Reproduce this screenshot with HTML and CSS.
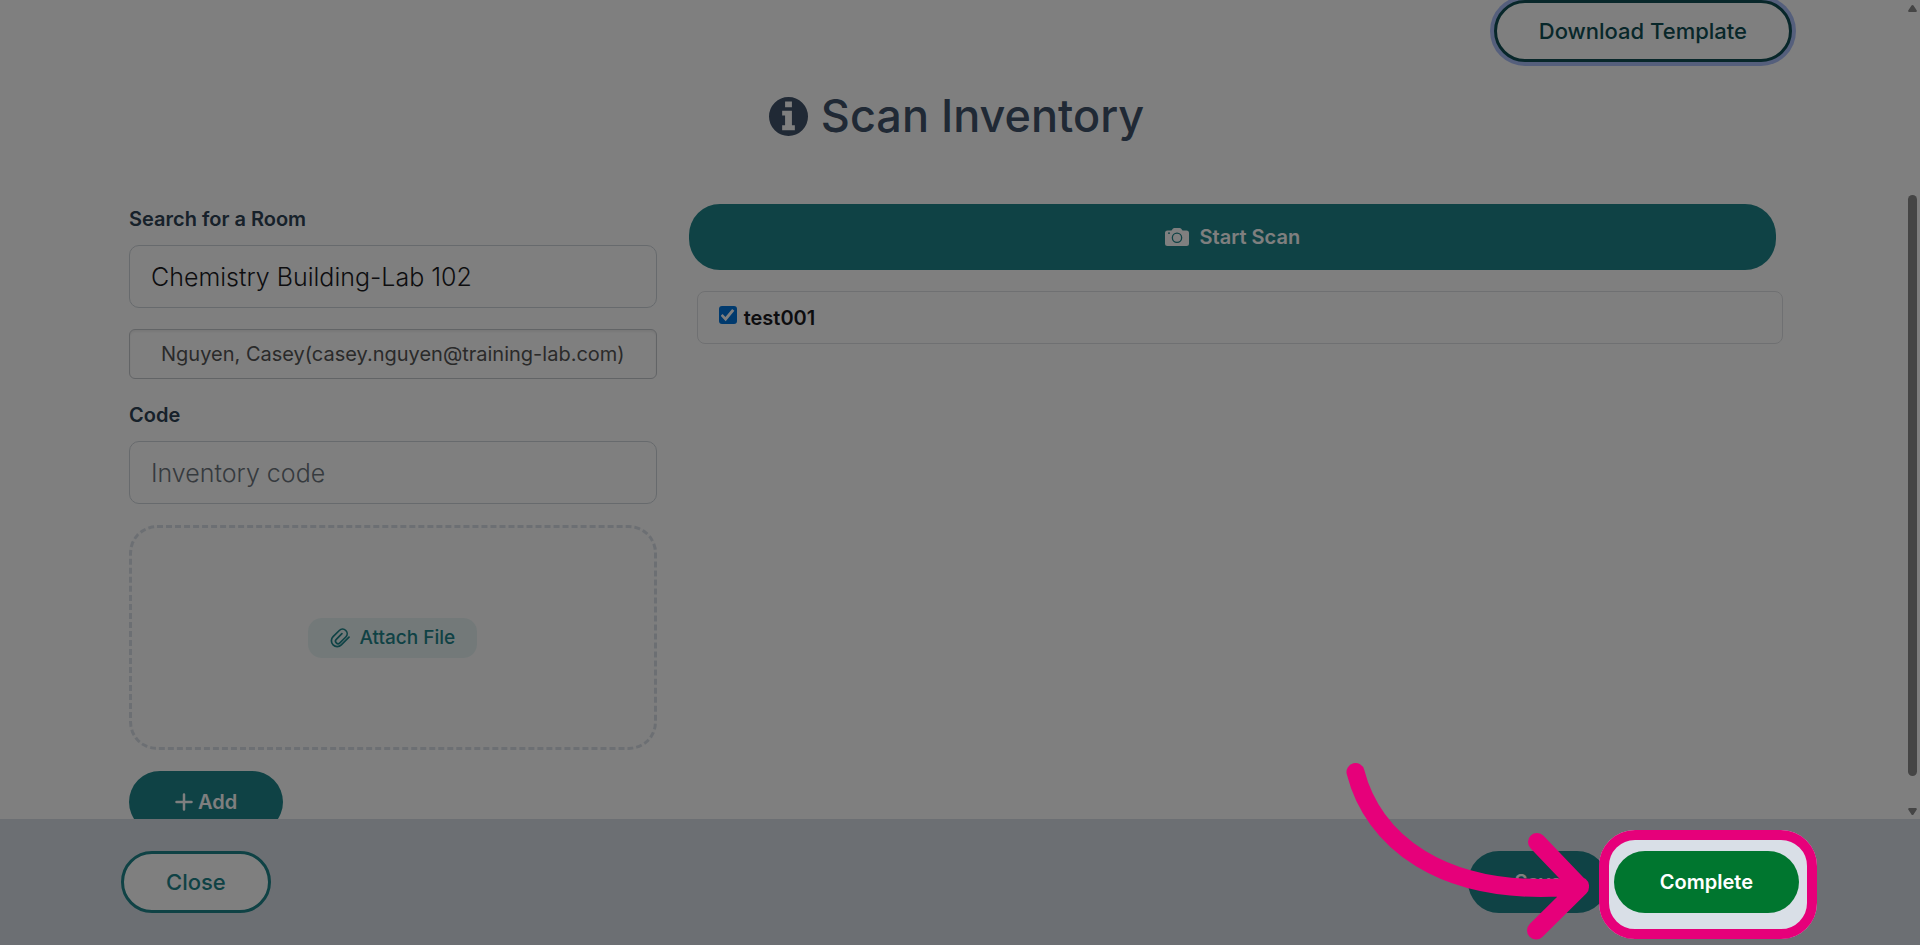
FILE: index.html
```html
<!DOCTYPE html>
<html lang="en">
<head>
<meta charset="utf-8">
<title>Scan Inventory</title>
<link rel="stylesheet" href="styles.css">
</head>
<body>
<div class="app">
  <main class="scroll-area">
    <div class="container">
      <div class="toolbar">
        <button type="button" class="btn btn-outline btn-focused">Download Template</button>
      </div>
      <h1 class="title">
        <svg class="title-icon" viewBox="0 0 40 40" aria-hidden="true"><path fill="currentColor" fill-rule="evenodd" d="M20 0a20 20 0 1 0 0 40a20 20 0 1 0 0-40zM16.500 4.500h7v6h-7zM13.500 14h10v15h3v5h-13v-5h3v-10h-3z"/></svg>
        <span>Scan Inventory</span>
      </h1>
      <div class="columns">
        <form class="column">
          <label class="label" for="room">Search for a Room</label>
          <input class="input" id="room" type="text" value="Chemistry Building-Lab 102">
          <button type="button" class="person">Nguyen, Casey(casey.nguyen@training-lab.com)</button>
          <label class="label" for="code">Code</label>
          <input class="input" id="code" type="text" placeholder="Inventory code">
          <div class="dropzone">
            <button type="button" class="attach">
              <svg class="attach-icon" viewBox="0 0 20 20" aria-hidden="true"><path fill="none" stroke="currentColor" stroke-width="1.700" stroke-linecap="round" stroke-linejoin="round" d="M19 9.200l-7.700 7.700a5.800 5.800 0 0 1-8.200 0a5.800 5.800 0 0 1 0-8.200l6.200-6.200a4.600 4.600 0 0 1 6.500 0a4.600 4.600 0 0 1 0 6.500l-5.900 5.900a2.500 2.500 0 0 1-3.600-3.600l5.600-5.600"/></svg>
              <span>Attach File</span>
            </button>
          </div>
          <button type="button" class="btn btn-primary add">
            <svg class="add-icon" viewBox="0 0 18 18" aria-hidden="true"><path fill="none" stroke="currentColor" stroke-width="2.500" stroke-linecap="round" d="M9 1.500v15M1.500 9h15"/></svg>
            <span>Add</span>
          </button>
        </form>
        <section class="column">
          <button type="button" class="btn btn-primary scan">
            <svg class="scan-icon" viewBox="0 0 24 18" aria-hidden="true"><path fill="currentColor" fill-rule="evenodd" d="M2.500 2.400h4L8 .6Q8.500 0 9.300 0h5.400q.8 0 1.300.6l1.500 1.800h4q2.500 0 2.500 2.500v10.600q0 2.500-2.500 2.500h-19Q0 18 0 15.500V4.900q0-2.500 2.500-2.500zM12 4.500a5.300 5.300 0 1 0 0 10.600a5.300 5.300 0 1 0 0-10.600zM12 5.800a4 4 0 1 1 0 8a4 4 0 1 1 0-8zM3 4.600v1.100h2V4.600z"/></svg>
            <span>Start Scan</span>
          </button>
          <div class="item">
            <input class="check" type="checkbox" id="item1" checked>
            <label class="item-label" for="item1">test001</label>
          </div>
        </section>
      </div>
    </div>
    <div class="scrollbar" aria-hidden="true">
      <svg class="scroll-arrow" viewBox="0 0 9 7"><path fill="#8a8a8a" d="M4.500 0q.6 0 1 .6L8.800 5.500Q9 7 8 7H1Q0 7 .2 5.500L3.500.6q.4-.6 1-.6z"/></svg>
      <div class="scroll-track"><div class="scroll-thumb"></div></div>
      <svg class="scroll-arrow" viewBox="0 0 9 7"><path fill="#8a8a8a" d="M4.500 7q.6 0 1-.6L8.800 1.500Q9 0 8 0H1Q0 0 .2 1.500l3.300 4.900q.4.600 1 .6z"/></svg>
    </div>
  </main>
  <footer class="footer">
    <button type="button" class="btn btn-outline">Close</button>
    <div class="actions">
      <button type="button" class="btn btn-primary save">Save</button>
      <div class="spot">
        <button type="button" class="btn btn-success">Complete</button>
        <div class="spot-ring"></div>
        <svg class="spot-arrow" viewBox="0 0 250 180" aria-hidden="true"><path fill="none" stroke="#e6007a" stroke-width="18" stroke-linecap="round" stroke-linejoin="round" d="M15.500 12C32 77 98 140 240 126M197 82L240 127L196 170.500"/></svg>
      </div>
    </div>
  </footer>
</div>
</body>
</html>
```
FILE: styles.css
```css
* { box-sizing: border-box; }
body { margin: 0; font-family: Inter, "Liberation Sans", sans-serif; font-size: 20px; color: #1b1b1f; background: #fff; }
button, input { font: inherit; }
.app { display: flex; flex-direction: column; height: 100vh; overflow: hidden; }
.scroll-area { display: flex; flex: 1; min-height: 0; overflow: hidden; }
.container { flex: 1; padding: 0 114px 0 113px; }
.toolbar { display: flex; justify-content: flex-end; }

.btn { display: inline-flex; align-items: center; justify-content: center; height: 62px; padding: 0 46px; border: 0; border-radius: 31px; font-weight: 600; white-space: nowrap; }
.btn-primary { background: #1e848a; color: #fff; }
.btn-success { background: #00762f; color: #fff; }
.btn-outline { padding: 0 42px; border: 3px solid #1e848a; background: #fff; color: #1e848a; font-size: 22px; font-weight: 500; }
.btn-focused { border-color: #104f54; color: #104f54; box-shadow: 0 0 0 4px #abbff8; }

.title { display: flex; align-items: center; justify-content: center; gap: 13px; margin: 23px 0 57px; padding-left: 8px; font-size: 45px; line-height: 62px; font-weight: 500; color: #40526a; }
.title-icon { width: 39px; height: 39px; }

.columns { display: grid; grid-template-columns: 1fr 2fr; align-items: start; }
.column { display: flex; flex-direction: column; min-width: 0; padding: 0 16px; }
.label { margin-bottom: 11px; line-height: 30px; font-weight: 600; color: #2e4254; }
.input { width: 100%; height: 63px; padding: 0 21px; border: 1px solid #ced4da; border-radius: 10px; background: #fff; color: #1b1b1f; font-size: 25px; font-weight: 300; }
.input::placeholder { color: #6c757d; opacity: 1; }
.person { height: 50px; margin: 21px 0; padding: 0 12px; border: 1px solid #c4c8cc; border-radius: 6px; background: #fff; box-shadow: inset 0 2px 2px #f0f0f0; color: #555; white-space: nowrap; }
.dropzone { display: flex; align-items: center; justify-content: center; height: 225px; margin: 21px 0; border: 3px dashed #d9dfe7; border-radius: 28px; background: #fcfcfc; }
.attach { display: flex; align-items: center; gap: 9px; height: 40px; padding: 0 22px; border: 0; border-radius: 14px; background: #e6f3f3; color: #1e848a; font-size: 19px; font-weight: 500; }
.attach-icon { width: 20px; height: 20px; }
.add { align-self: flex-start; gap: 5px; }
.add-icon { width: 18px; height: 18px; }

.scan { height: 66px; gap: 11px; }
.scan-icon { width: 24px; height: 18px; }
.item { display: flex; align-items: center; gap: 7px; height: 53px; margin: 21px -7px 0 8px; padding: 0 21px; border: 1px solid #dfe1e4; border-radius: 8px; }
.check { appearance: none; width: 18px; height: 18px; margin: 0 0 5px; border-radius: 3px; background: #0075dd; display: grid; place-items: center; }
.check::before { content: ""; width: 14px; height: 14px; background: #fff; clip-path: polygon(0 56%, 14% 42%, 34% 64%, 82% 8%, 98% 20%, 36% 94%); }
.item-label { font-weight: 600; }

.scrollbar { display: flex; flex-direction: column; justify-content: space-between; width: 14px; padding: 5px 3px 4px 2px; }
.scroll-arrow { width: 9px; height: 7px; }
.scroll-track { display: flex; flex-direction: column; justify-content: flex-end; flex: 1; padding-bottom: 32px; }
.scroll-thumb { height: 76%; border-radius: 5px; background: #8a8a8a; }

.footer { display: flex; align-items: center; justify-content: space-between; height: 126px; padding: 0 121px; background: #d9dfe7; }
.actions { display: flex; gap: 6px; }

/* Guided-tour spotlight: the ring dims everything outside it */
.spot { position: relative; }
.spot-ring { position: absolute; inset: -21px -18px -26px -15px; border: 10px solid #e6007a; border-radius: 36px; box-shadow: 0 0 0 3000px rgba(0, 0, 0, 0.5); pointer-events: none; }
.spot-arrow { position: absolute; top: -91px; right: 209px; width: 250px; height: 180px; pointer-events: none; }
```
